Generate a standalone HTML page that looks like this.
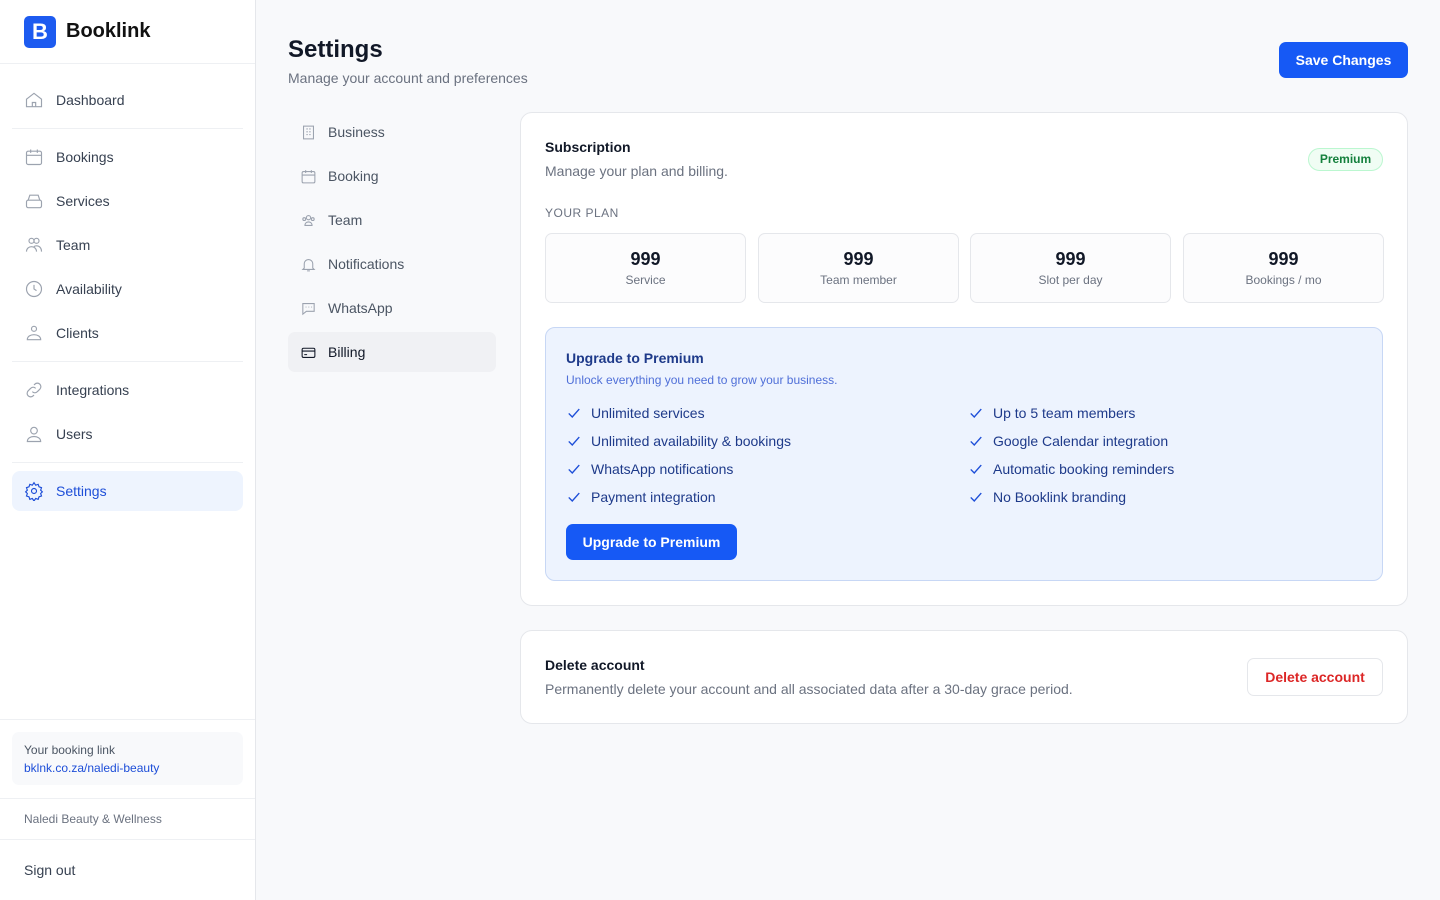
<!DOCTYPE html>
<html><head><meta charset="utf-8"><style>
*{box-sizing:border-box;margin:0;padding:0}
body{width:1440px;height:900px;font-family:"Liberation Sans",sans-serif;background:#f8f9fb;color:#111827;position:relative;overflow:hidden}
.side{position:absolute;left:0;top:0;width:256px;height:900px;background:#fff;border-right:1px solid #e5e7eb}
.logo{height:64px;border-bottom:1px solid #eef0f3;display:flex;align-items:center;padding-left:24px}
.logo .b{width:32px;height:32px;background:#1d5bf0;border-radius:5px;color:#fff;font-weight:bold;font-size:22px;display:flex;align-items:center;justify-content:center}
.logo span{font-size:20px;font-weight:bold;margin-left:10px;color:#111}
.nav{padding:0 12px}
.it{height:40px;display:flex;align-items:center;padding-left:12px;font-size:14px;color:#374151;border-radius:8px}
.it svg{width:20px;height:20px;margin-right:12px;stroke:#9ca3af;fill:none;stroke-width:1.4}
.sep{border-top:1px solid #eef0f3;margin:8px 0}
.act{background:#eef4fe;color:#1d4ed8}
.act svg{stroke:#1d4ed8}
h1{position:absolute;top:36px;font-size:24px;font-weight:bold}
.sub{position:absolute;top:70px;font-size:14px;color:#6b7280}
.btn{background:#1659f5;color:#fff;font-weight:bold;font-size:14px;border-radius:7px;display:flex;align-items:center;justify-content:center}
.tabs{position:absolute;left:288px;top:112px;width:208px}
.tab{height:40px;display:flex;align-items:center;padding-left:12px;font-size:14px;color:#4b5563;margin-bottom:4px;border-radius:7px}
.tab svg{width:17px;height:17px;margin-right:11px;stroke:#9ca3af;fill:none;stroke-width:1.5}
.card{position:absolute;left:520px;width:888px;background:#fff;border:1px solid #e5e7eb;border-radius:12px}
.stat{position:absolute;top:120px;width:201px;height:70px;border:1px solid #e5e7eb;border-radius:7px;text-align:center;background:#fcfcfd}
.stat b{display:block;font-size:18px;margin-top:15px;line-height:20px}
.stat span{display:block;font-size:12px;color:#6b7280;margin-top:4px}
.chk{position:absolute;font-size:14px;color:#1e3a8a;display:flex;align-items:center}
.chk svg{width:14px;height:14px;margin-right:10px;stroke:#1d4ed8;fill:none;stroke-width:1.6}
</style></head><body>
<div class="side">
<div class="logo"><div class="b">B</div><span>Booklink</span></div>
<div class="nav" style="padding-top:16px">
<div class="it"><svg viewBox="0 0 24 24"><path d="M3 11l9-7 9 7v9H3z M10 20v-5h4v5"/></svg>Dashboard</div>
<div class="sep"></div>
<div class="it"><svg viewBox="0 0 24 24"><rect x="3" y="5" width="18" height="16" rx="2"/><path d="M8 3v4M16 3v4M3 10h18"/></svg>Bookings</div>
<div style="height:4px"></div>
<div class="it"><svg viewBox="0 0 24 24"><rect x="3" y="11" width="18" height="9" rx="2"/><path d="M5 11l2-6h10l2 6"/></svg>Services</div>
<div style="height:4px"></div>
<div class="it"><svg viewBox="0 0 24 24"><circle cx="9" cy="7" r="3"/><circle cx="15" cy="7" r="3"/><path d="M3 20c0-4 3-6 6-6s6 2 6 6M12 14c1-1 2-1 3-1 3 0 6 2 6 7"/></svg>Team</div>
<div style="height:4px"></div>
<div class="it"><svg viewBox="0 0 24 24"><circle cx="12" cy="12" r="9"/><path d="M12 7v5l3 2"/></svg>Availability</div>
<div style="height:4px"></div>
<div class="it"><svg viewBox="0 0 24 24"><circle cx="12" cy="7" r="3"/><path d="M4 20c0-4 4-6 8-6s8 2 8 6z"/></svg>Clients</div>
<div class="sep"></div>
<div class="it"><svg viewBox="0 0 24 24"><path d="M10 14a4 4 0 0 0 6 0l3-3a4 4 0 0 0-6-6l-1 1M14 10a4 4 0 0 0-6 0l-3 3a4 4 0 0 0 6 6l1-1"/></svg>Integrations</div>
<div style="height:4px"></div>
<div class="it"><svg viewBox="0 0 24 24"><circle cx="12" cy="8" r="4"/><path d="M4 21c0-4 4-6 8-6s8 2 8 6z"/></svg>Users</div>
<div class="sep"></div>
<div class="it act"><svg viewBox="0 0 24 24"><circle cx="12" cy="12" r="3"/><path d="M12 2l2 3 3-1 1 3 3 1-1 3 2 2-2 2 1 3-3 1-1 3-3-1-2 3-2-3-3 1-1-3-3-1 1-3-2-2 2-2-1-3 3-1 1-3 3 1z"/></svg>Settings</div>
</div>
<div style="position:absolute;top:719px;left:0;right:0;border-top:1px solid #eef0f3"></div>
<div style="position:absolute;top:732px;left:12px;width:231px;height:53px;background:#f8f9fb;border-radius:7px;padding:9px 12px;font-size:12px;color:#4b5563;line-height:18px">Your booking link<br><span style="color:#1d4ed8">bklnk.co.za/naledi-beauty</span></div>
<div style="position:absolute;top:798px;left:0;right:0;border-top:1px solid #eef0f3"></div>
<div style="position:absolute;top:812px;left:24px;font-size:12px;color:#6b7280">Naledi Beauty &amp; Wellness</div>
<div style="position:absolute;top:839px;left:0;right:0;border-top:1px solid #eef0f3"></div>
<div style="position:absolute;top:862px;left:24px;font-size:14px;color:#374151">Sign out</div>
</div>

<h1 style="left:288px">Settings</h1>
<div class="sub" style="left:288px">Manage your account and preferences</div>
<div class="btn" style="position:absolute;left:1279px;top:42px;width:129px;height:36px">Save Changes</div>

<div class="tabs">
<div class="tab"><svg viewBox="0 0 24 24"><rect x="5" y="3" width="14" height="18"/><path d="M9 7h2M13 7h2M9 11h2M13 11h2M9 15h2M13 15h2"/></svg>Business</div>
<div class="tab"><svg viewBox="0 0 24 24"><rect x="3" y="5" width="18" height="16" rx="2"/><path d="M8 3v4M16 3v4M3 10h18"/></svg>Booking</div>
<div class="tab"><svg viewBox="0 0 24 24"><circle cx="12" cy="8" r="3"/><circle cx="6" cy="10" r="2"/><circle cx="18" cy="10" r="2"/><path d="M7 19c0-3 2-5 5-5s5 2 5 5z"/></svg>Team</div>
<div class="tab"><svg viewBox="0 0 24 24"><path d="M6 17V11a6 6 0 0 1 12 0v6l2 2H4zM10 21h4"/></svg>Notifications</div>
<div class="tab"><svg viewBox="0 0 24 24"><path d="M4 5h16v11H9l-5 4z"/><path d="M8 10h1M12 10h1M16 10h1"/></svg>WhatsApp</div>
<div class="tab" style="background:#f0f1f4;color:#111827"><svg viewBox="0 0 24 24" style="stroke:#111827"><rect x="3" y="6" width="18" height="13" rx="2"/><path d="M3 10h18M6 15h4"/></svg>Billing</div>
</div>

<div class="card" style="top:112px;height:494px">
<div style="position:absolute;left:24px;top:26px;font-size:14px;font-weight:bold">Subscription</div>
<div style="position:absolute;left:24px;top:50px;font-size:14px;color:#6b7280">Manage your plan and billing.</div>
<div style="position:absolute;left:787px;top:35px;width:75px;height:23px;border:1px solid #bbf7d0;background:#f0fdf4;border-radius:12px;color:#15803d;font-size:12px;font-weight:bold;text-align:center;line-height:21px">Premium</div>
<div style="position:absolute;left:24px;top:93px;font-size:12px;color:#6b7280;letter-spacing:.5px">YOUR PLAN</div>
<div class="stat" style="left:24px"><b>999</b><span>Service</span></div>
<div class="stat" style="left:237px"><b>999</b><span>Team member</span></div>
<div class="stat" style="left:449px"><b>999</b><span>Slot per day</span></div>
<div class="stat" style="left:662px"><b>999</b><span>Bookings / mo</span></div>
<div style="position:absolute;left:24px;top:214px;width:838px;height:254px;border:1px solid #c7d7f5;border-radius:10px;background:#edf3fe">
<div style="position:absolute;left:20px;top:22px;font-size:14px;font-weight:bold;color:#1e3a8a">Upgrade to Premium</div>
<div style="position:absolute;left:20px;top:45px;font-size:12px;color:#4f6fd8">Unlock everything you need to grow your business.</div>
<div class="chk" style="left:21px;top:77px"><svg viewBox="0 0 16 16"><path d="M2 8.5l4 4 8-9"/></svg>Unlimited services</div>
<div class="chk" style="left:21px;top:105px"><svg viewBox="0 0 16 16"><path d="M2 8.5l4 4 8-9"/></svg>Unlimited availability &amp; bookings</div>
<div class="chk" style="left:21px;top:133px"><svg viewBox="0 0 16 16"><path d="M2 8.5l4 4 8-9"/></svg>WhatsApp notifications</div>
<div class="chk" style="left:21px;top:161px"><svg viewBox="0 0 16 16"><path d="M2 8.5l4 4 8-9"/></svg>Payment integration</div>
<div class="chk" style="left:423px;top:77px"><svg viewBox="0 0 16 16"><path d="M2 8.5l4 4 8-9"/></svg>Up to 5 team members</div>
<div class="chk" style="left:423px;top:105px"><svg viewBox="0 0 16 16"><path d="M2 8.5l4 4 8-9"/></svg>Google Calendar integration</div>
<div class="chk" style="left:423px;top:133px"><svg viewBox="0 0 16 16"><path d="M2 8.5l4 4 8-9"/></svg>Automatic booking reminders</div>
<div class="chk" style="left:423px;top:161px"><svg viewBox="0 0 16 16"><path d="M2 8.5l4 4 8-9"/></svg>No Booklink branding</div>
<div class="btn" style="position:absolute;left:20px;top:196px;width:171px;height:36px">Upgrade to Premium</div>
</div>
</div>

<div class="card" style="top:630px;height:94px">
<div style="position:absolute;left:24px;top:26px;font-size:14px;font-weight:bold">Delete account</div>
<div style="position:absolute;left:24px;top:50px;font-size:14px;color:#6b7280">Permanently delete your account and all associated data after a 30-day grace period.</div>
<div style="position:absolute;left:726px;top:27px;width:136px;height:38px;border:1px solid #e5e7eb;border-radius:7px;color:#dc2626;font-weight:bold;font-size:14px;text-align:center;line-height:36px">Delete account</div>
</div>
</body></html>
